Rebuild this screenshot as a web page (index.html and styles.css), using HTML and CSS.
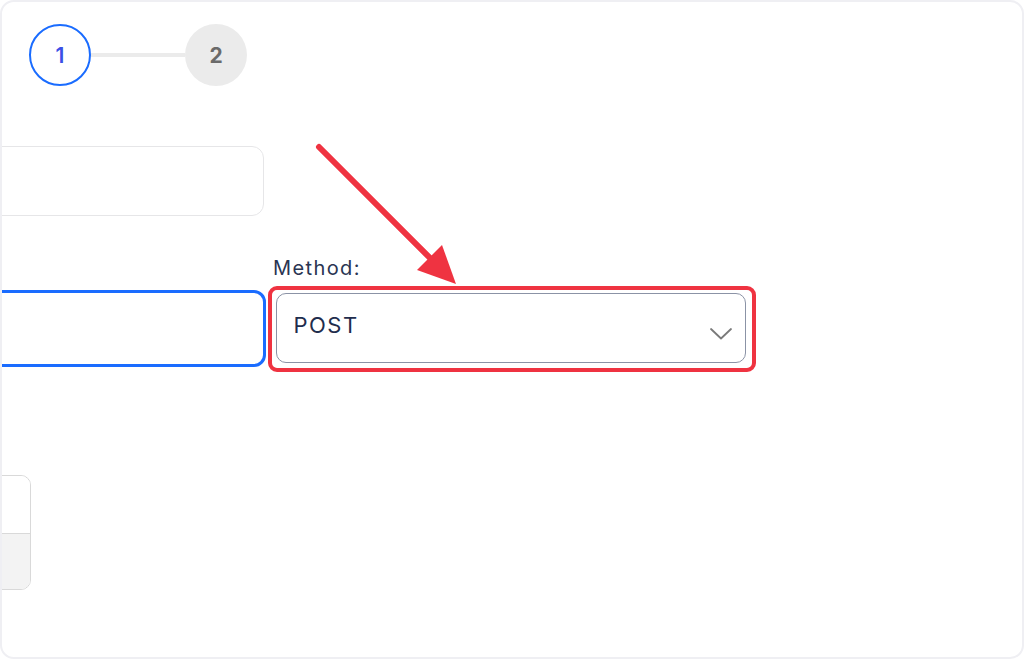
FILE: index.html
```html
<!DOCTYPE html>
<html lang="en">
<head>
<meta charset="utf-8">
<title>Request step</title>
<link rel="stylesheet" href="styles.css">
</head>
<body>
<div class="frame">
  <div class="stepper">
    <div class="step step-active">1</div>
    <div class="step-line"></div>
    <div class="step step-next">2</div>
  </div>

  <div class="form">
    <div class="field field-plain"></div>

    <div class="row">
      <div class="col-left">
        <div class="field field-focus"></div>
      </div>
      <div class="col-right">
        <label class="label">Method:</label>
        <div class="highlight">
          <div class="select">
            <span class="select-value">POST</span>
            <svg class="chevron" width="24" height="14" viewBox="0 0 24 14" aria-hidden="true">
              <path d="M2 2 L12 11.5 L22 2" fill="none" stroke="#7a7a7a" stroke-width="1.8" stroke-linecap="round" stroke-linejoin="round"/>
            </svg>
          </div>
        </div>
      </div>
    </div>

    <div class="table-stub">
      <div class="table-head"></div>
      <div class="table-foot"></div>
    </div>
  </div>

  <svg class="arrow" width="1024" height="659" viewBox="0 0 1024 659" aria-hidden="true">
    <line x1="319" y1="147" x2="433" y2="261" stroke="#ef3341" stroke-width="6" stroke-linecap="round"/>
    <polygon points="456,284 417,270 442,245" fill="#ef3341"/>
  </svg>
</div>
</body>
</html>
```

FILE: styles.css
```css
* { box-sizing: border-box; }

html, body {
  margin: 0;
  padding: 0;
  background: #ffffff;
}

body {
  font-family: "Inter", "DejaVu Sans", sans-serif;
  color: #1f2d4d;
}

.frame {
  position: relative;
  width: 1024px;
  height: 659px;
  border: 2px solid #efeff3;
  border-radius: 14px;
  overflow: hidden;
  background: #ffffff;
}

.stepper {
  display: flex;
  align-items: center;
  margin-top: 22px;
  padding-left: 27px;
}

.step {
  width: 62px;
  height: 62px;
  border-radius: 50%;
  display: flex;
  align-items: center;
  justify-content: center;
  font-size: 21px;
  font-weight: 600;
}

.step-active {
  border: 2.5px solid #1a6cff;
  color: #3b4fe6;
}

.step-next {
  background: #ebebeb;
  color: #6a6a6a;
  font-weight: 700;
}

.step-line {
  width: 94px;
  height: 4px;
  background: #ebebeb;
}

.form {
  margin-left: -42px;
  margin-top: 60px;
  display: flex;
  flex-direction: column;
  align-items: flex-start;
}

.field {
  width: 304px;
  background: #ffffff;
}

.field-plain {
  height: 70px;
  border: 1.5px solid #e6e6e8;
  border-radius: 12px;
}

.row {
  display: flex;
  align-items: flex-start;
  gap: 2px;
  margin-top: 40px;
}

.col-left {
  padding-top: 34px;
}

.field-focus {
  width: 306px;
  height: 77px;
  border: 3px solid #1a6cff;
  border-radius: 12px;
}

.col-right {
  display: flex;
  flex-direction: column;
}

.label {
  display: block;
  font-size: 20px;
  line-height: 24px;
  letter-spacing: 1.4px;
  color: #2a3552;
  margin-left: 5px;
  margin-bottom: 6px;
}

.highlight {
  border: 4.5px solid #ef3341;
  border-radius: 9px;
  padding: 2.5px 6px 5.5px 3.5px;
}

.select {
  width: 470px;
  height: 70px;
  border: 1.5px solid #8b93a6;
  border-radius: 10px;
  display: flex;
  align-items: center;
  justify-content: space-between;
  padding: 0 12px 0 17px;
}

.select-value {
  font-size: 22px;
  letter-spacing: 1.5px;
  color: #1f2d4d;
  margin-top: -6px;
}

.chevron {
  margin-top: 13px;
}

.table-stub {
  margin-top: 103px;
  width: 71px;
  height: 115px;
  border: 1.5px solid #d9d9d9;
  border-radius: 10px;
  overflow: hidden;
  display: flex;
  flex-direction: column;
}

.table-head {
  height: 58px;
  border-bottom: 1.5px solid #d9d9d9;
  background: #ffffff;
}

.table-foot {
  flex: 1;
  background: #f3f3f3;
}

.arrow {
  position: absolute;
  left: -2px;
  top: -2px;
  pointer-events: none;
}
```
